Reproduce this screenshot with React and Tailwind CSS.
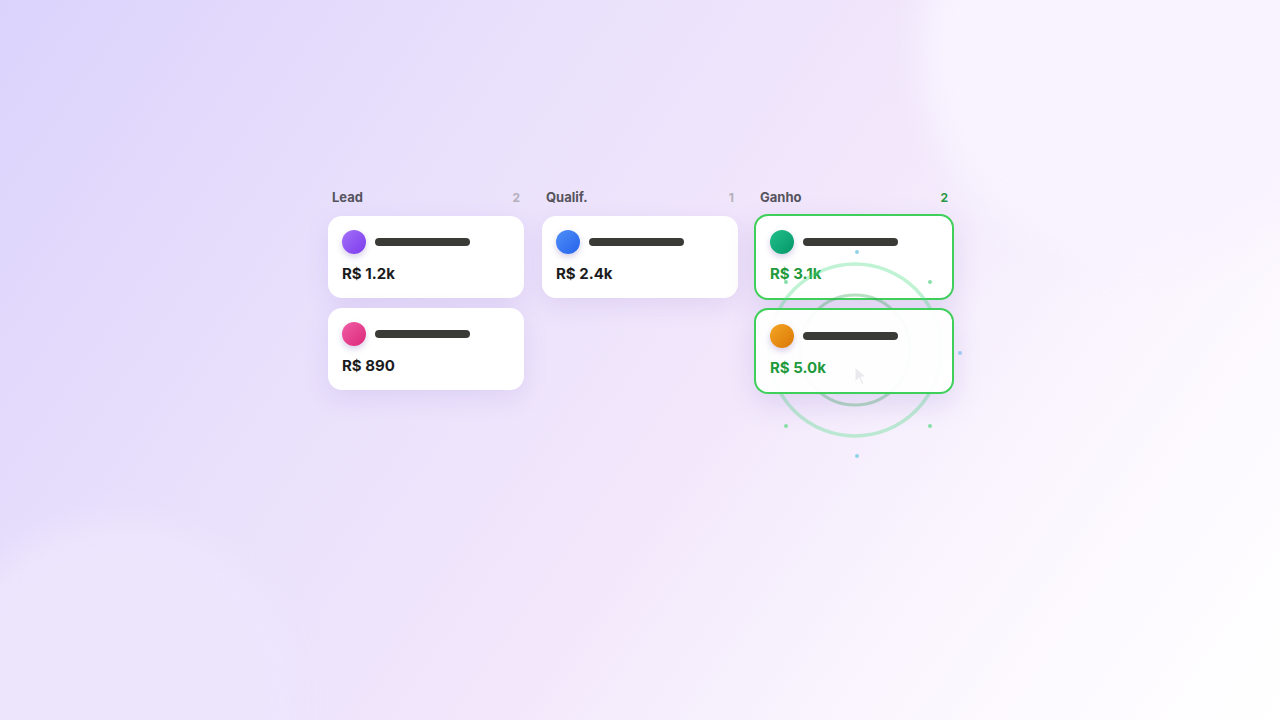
import React from 'react'

const columns = [
  {
    title: 'Lead',
    count: 2,
    cards: [
      { value: 'R$ 1.2k', avatar: 'bg-[linear-gradient(135deg,#a371f7,#7c3aed)]' },
      { value: 'R$ 890', avatar: 'bg-[linear-gradient(135deg,#f05ea8,#db2777)]' },
    ],
  },
  {
    title: 'Qualif.',
    count: 1,
    cards: [{ value: 'R$ 2.4k', avatar: 'bg-[linear-gradient(135deg,#4f8ff7,#2563eb)]' }],
  },
]

const dots = [
  [857, 252, '#8fd3e8'],
  [930, 282, '#86e0a8'],
  [960, 353, '#9cc8f0'],
  [930, 426, '#86e0a8'],
  [857, 456, '#8fd3e8'],
  [786, 426, '#86e0a8'],
  [786, 282, '#86e0a8'],
]

function Avatar({ className }) {
  return <div className={`w-6 h-6 rounded-full shrink-0 shadow-[0_3px_6px_rgba(90,60,160,0.25)] ${className}`} />
}

function Card({ value, avatar }) {
  return (
    <div className="bg-white rounded-[14px] px-[14px] pt-[14px] pb-[14px] h-[82px] shadow-[0_8px_24px_rgba(120,90,200,0.13)]">
      <div className="flex items-center gap-[9px]">
        <Avatar className={avatar} />
        <div className="w-[95px] h-2 rounded-full bg-[#3a3a36]" />
      </div>
      <div className="mt-[10px] text-[15px] leading-5 font-bold text-[#1c1c1e]">{value}</div>
    </div>
  )
}

function WonCard({ value, avatar, className = '' }) {
  return (
    <div
      className={`w-[200px] h-[86px] rounded-[14px] border-2 border-[#3fcf5b] px-[14px] pt-[14px] shadow-[0_10px_28px_rgba(110,80,190,0.16)] ${className}`}
    >
      <div className="flex items-center gap-[9px]">
        <Avatar className={avatar} />
        <div className="w-[95px] h-2 rounded-full bg-[#3a3a36]" />
      </div>
      <div className="mt-[10px] text-[15px] leading-5 font-bold text-[#1f9a3c]">{value}</div>
    </div>
  )
}

function Column({ title, count, cards }) {
  return (
    <div className="w-[196px] flex flex-col">
      <div className="flex items-center justify-between px-1 h-[19px] mb-[9px]">
        <span className="text-[13px] font-bold text-[#55535c]">{title}</span>
        <span className="text-[12px] font-bold text-[#b3b0ba]">{count}</span>
      </div>
      <div className="flex flex-col gap-[10px]">
        {cards.map((c, i) => (
          <Card key={i} {...c} />
        ))}
      </div>
    </div>
  )
}

export default function App() {
  return (
    <div
      className="relative w-[1280px] h-[720px] overflow-hidden bg-[linear-gradient(125deg,#dbd3fc_0%,#e9e0fc_30%,#f2e7fb_55%,#faf5fe_75%,#ffffff_100%)]"
      style={{ fontFamily: 'Inter, "Open Sans", sans-serif' }}
    >
      {/* soft light blobs */}
      <div className="absolute left-[920px] -top-[160px] w-[440px] h-[420px] rounded-full bg-[#f8f3ff] blur-[18px]" />
      <div className="absolute -left-[60px] top-[520px] w-[360px] h-[360px] rounded-full bg-[#ede6fd] blur-[14px] opacity-90" />

      <div className="relative flex justify-center gap-[18px] pt-[188px]">
        {columns.map(col => (
          <Column key={col.title} {...col} />
        ))}

        {/* won column */}
        <div className="relative w-[196px] flex flex-col">
          <div className="flex items-center justify-between px-1 h-[19px] mb-[7px]">
            <span className="text-[13px] font-bold text-[#55535c]">Ganho</span>
            <span className="text-[12px] font-bold text-[#2a9a44]">2</span>
          </div>
          <div className="flex flex-col gap-2 -mx-[2px]">
            <WonCard value="R$ 3.1k" avatar="bg-[linear-gradient(135deg,#22c08a,#059669)]" className="relative bg-white" />
            <div className="h-[86px]" />
          </div>

          {/* success rings */}
          <svg className="absolute left-[-21px] top-[42px] z-10 pointer-events-none" width="240" height="240" viewBox="0 0 240 240">
            <circle cx="120" cy="120" r="86" fill="none" stroke="#4ade80" strokeOpacity="0.35" strokeWidth="3.5" />
            <circle cx="120" cy="120" r="55" fill="none" stroke="#34a853" strokeOpacity="0.35" strokeWidth="3" />
          </svg>

          <WonCard
            value="R$ 5.0k"
            avatar="bg-[linear-gradient(135deg,#f5a524,#d97706)]"
            className="absolute left-[-2px] top-[120px] z-20 bg-white/[0.94]"
          />

          {/* cursor */}
          <svg className="absolute left-[98px] top-[178px] z-30" width="14" height="20" viewBox="0 0 14 20">
            <path d="M1 1 L1 16 L5 12 L8 19 L10 18 L7 11 L12 11 Z" fill="#e4e4ea" fillOpacity="0.8" stroke="#ffffff" strokeWidth="1" />
          </svg>
        </div>
      </div>

      {dots.map(([x, y, c], i) => (
        <div
          key={i}
          className="absolute w-[4px] h-[4px] rounded-full z-30"
          style={{ left: x - 2, top: y - 2, background: c }}
        />
      ))}
    </div>
  )
}
